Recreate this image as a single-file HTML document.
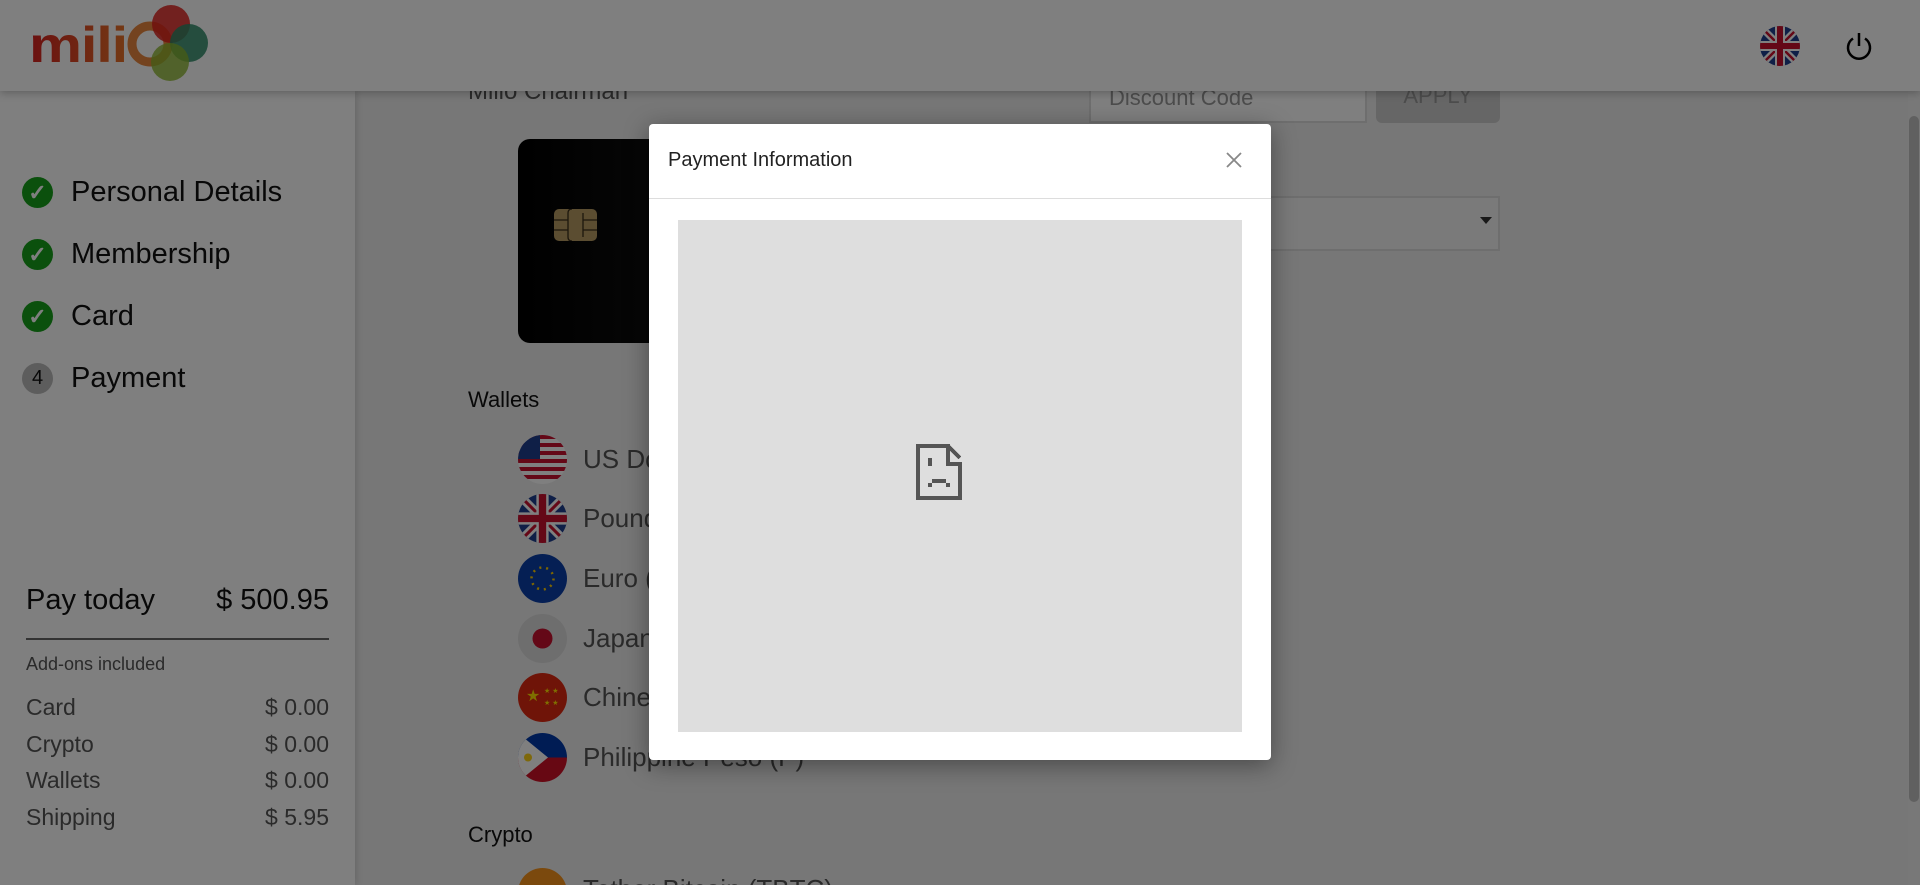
<!DOCTYPE html>
<html><head><meta charset="utf-8">
<style>
*{box-sizing:border-box;margin:0;padding:0}
html,body{width:1920px;height:885px;overflow:hidden}
body{font-family:"Liberation Sans",sans-serif;background:#eee}
#wrap{position:relative;width:1920px;height:885px;overflow:hidden;background:#eee}
.abs{position:absolute}
#header{left:0;top:0;width:1920px;height:91px;background:#fff;box-shadow:0 2px 8px rgba(0,0,0,.25);z-index:3}
#side{left:0;top:91px;width:355px;height:794px;background:#fefefe;box-shadow:2px 0 6px rgba(0,0,0,.12);z-index:2}
.step{left:22px;font-size:29px;color:#111;display:flex;align-items:center;letter-spacing:0px}
.chk{width:31px;height:31px;border-radius:50%;background:#17a11a;color:#fff;font-size:22px;display:flex;align-items:center;justify-content:center;margin-right:18px;font-weight:bold}
.num{width:31px;height:31px;border-radius:50%;background:#bbb;color:#111;font-size:20px;display:flex;align-items:center;justify-content:center;margin-right:18px}
.row{left:26px;width:303px;display:flex;justify-content:space-between;font-size:23px;color:#555}
.flag{left:518px;width:49px;height:49px;border-radius:50%;overflow:hidden}
.wl{left:583px;font-size:26px;color:#555}
#ov{left:0;top:0;width:1920px;height:885px;background:rgba(0,0,0,.5);z-index:10}
#modal{left:649px;top:124px;width:622px;height:636px;background:#fff;border-radius:4px;z-index:11;box-shadow:0 5px 25px rgba(0,0,0,.4)}
</style></head><body><div id="wrap">
<div id="header" class="abs">
 <svg class="abs" style="left:0;top:0" width="230" height="91" viewBox="0 0 230 91">
  <defs><linearGradient id="lg" x1="0" x2="1"><stop offset="0" stop-color="#d6201f"/><stop offset="1" stop-color="#e8742a"/></linearGradient></defs>
  <text x="29" y="62" font-family="Liberation Sans" font-weight="bold" font-size="50" fill="url(#lg)" letter-spacing="-1" textLength="98" lengthAdjust="spacingAndGlyphs">mili</text>
  <circle cx="150" cy="44" r="18" fill="none" stroke="#e67a2a" stroke-width="9" opacity=".9"/>
  <circle cx="171" cy="24" r="19" fill="#e0211c" opacity=".85"/>
  <circle cx="189" cy="43" r="19" fill="#2a8a66" opacity=".85"/>
  <circle cx="170" cy="62" r="19" fill="#8bb52d" opacity=".8"/>
 </svg>
 <svg class="abs" style="left:1760px;top:26px" width="40" height="40" viewBox="0 0 40 40">
  <clipPath id="c0"><circle cx="20" cy="20" r="20"/></clipPath>
  <g clip-path="url(#c0)"><rect width="40" height="40" fill="#1f3f8f"/>
  <path d="M0 0L40 40M40 0L0 40" stroke="#fff" stroke-width="7"/><path d="M0 0L40 40M40 0L0 40" stroke="#c8102e" stroke-width="2.5"/>
  <path d="M20 0V40M0 20H40" stroke="#fff" stroke-width="10"/><path d="M20 0V40M0 20H40" stroke="#c8102e" stroke-width="6"/></g>
 </svg>
 <svg class="abs" style="left:1844px;top:31px" width="30" height="30" viewBox="0 0 30 30" fill="none" stroke="#000" stroke-width="2.5">
  <path d="M9 7.5A11 11 0 1 0 21 7.5"/><path d="M15 2V15"/>
 </svg>
</div>
<div id="side" class="abs">
 <div class="abs step" style="top:85px"><div class="chk">✓</div>Personal Details</div>
 <div class="abs step" style="top:147px"><div class="chk">✓</div>Membership</div>
 <div class="abs step" style="top:209px"><div class="chk">✓</div>Card</div>
 <div class="abs step" style="top:271px"><div class="num">4</div>Payment</div>
 <div class="abs" style="left:26px;top:493px;width:303px;display:flex;justify-content:space-between;font-size:29px;color:#111"><span>Pay today</span><span>$ 500.95</span></div>
 <div class="abs" style="left:26px;top:547px;width:303px;height:2px;background:#666"></div>
 <div class="abs" style="left:26px;top:563px;font-size:18px;color:#555">Add-ons included</div>
 <div class="abs row" style="top:603px"><span>Card</span><span>$ 0.00</span></div>
 <div class="abs row" style="top:640px"><span>Crypto</span><span>$ 0.00</span></div>
 <div class="abs row" style="top:676px"><span>Wallets</span><span>$ 0.00</span></div>
 <div class="abs row" style="top:713px"><span>Shipping</span><span>$ 5.95</span></div>
</div>
<div class="abs" style="left:468px;top:78px;font-size:24px;color:#555">Milio Chairman</div>
<div class="abs" style="left:1089px;top:73px;width:278px;height:50px;border:2px solid #ddd;background:#fff;font-size:22px;color:#999;padding:10px 18px">Discount Code</div>
<div class="abs" style="left:1376px;top:73px;width:124px;height:50px;border-radius:6px;background:#ccc;font-size:22px;color:#999;text-align:center;padding-top:10px">APPLY</div>
<div class="abs" style="left:1100px;top:196px;width:400px;height:55px;border:2px solid #ddd;background:#f4f4f4"></div>
<div class="abs" style="left:1480px;top:217px;width:0;height:0;border-left:6px solid transparent;border-right:6px solid transparent;border-top:7px solid #333"></div>
<div class="abs" style="left:518px;top:139px;width:260px;height:204px;border-radius:12px;background:linear-gradient(90deg,#000,#1a1a1a)">
 <svg class="abs" style="left:36px;top:70px" width="43" height="32" viewBox="0 0 43 32"><rect width="43" height="32" rx="5" fill="#b79a62"/><path d="M0 11H14M0 21H14M29 11H43M29 21H43M14 4Q14 0 18 0M14 4V28Q14 32 18 32M29 4V28" stroke="#3a2f1a" stroke-width="1.3" fill="none"/></svg>
</div>
<div class="abs" style="left:468px;top:387px;font-size:22px;color:#111">Wallets</div>
<svg class="abs flag" style="top:435px" viewBox="0 0 49 49"><rect width="49" height="49" fill="#fff"/><g fill="#c8102e"><rect y="0" width="49" height="4"/><rect y="8" width="49" height="4"/><rect y="16" width="49" height="4"/><rect y="24" width="49" height="4"/><rect y="32" width="49" height="4"/><rect y="40" width="49" height="4"/></g><rect width="22" height="24" fill="#1f3f8f"/></svg>
<svg class="abs flag" style="top:494px" viewBox="0 0 40 40"><rect width="40" height="40" fill="#1f3f8f"/><path d="M0 0L40 40M40 0L0 40" stroke="#fff" stroke-width="7"/><path d="M0 0L40 40M40 0L0 40" stroke="#c8102e" stroke-width="2.5"/><path d="M20 0V40M0 20H40" stroke="#fff" stroke-width="10"/><path d="M20 0V40M0 20H40" stroke="#c8102e" stroke-width="6"/></svg>
<svg class="abs flag" style="top:554px" viewBox="0 0 49 49"><rect width="49" height="49" fill="#0a3ea8"/><circle cx="24.5" cy="24.5" r="11" fill="none" stroke="#fc0" stroke-width="2.5" stroke-dasharray="2 4.9"/></svg>
<svg class="abs flag" style="top:614px" viewBox="0 0 49 49"><rect width="49" height="49" fill="#dcdcdc"/><circle cx="24.5" cy="24.5" r="10" fill="#c8102e"/></svg>
<svg class="abs flag" style="top:673px" viewBox="0 0 49 49"><rect width="49" height="49" fill="#de2910"/><text x="8" y="28" font-size="16" fill="#ffde00">★</text><text x="26" y="20" font-size="7" fill="#ffde00">★ ★</text><text x="26" y="32" font-size="7" fill="#ffde00">★ ★</text></svg>
<svg class="abs flag" style="top:733px" viewBox="0 0 49 49"><rect width="49" height="25" fill="#0038a8"/><rect y="24.5" width="49" height="25" fill="#ce1126"/><path d="M0 0L30 24.5L0 49Z" fill="#fff"/><circle cx="10" cy="24.5" r="4" fill="#fcd116"/></svg>
<div class="abs wl" style="top:444px">US Dollar ($)</div>
<div class="abs wl" style="top:503px">Pound (£)</div>
<div class="abs wl" style="top:563px">Euro (€)</div>
<div class="abs wl" style="top:623px">Japanese Yen (¥)</div>
<div class="abs wl" style="top:682px">Chinese Yuan (¥)</div>
<div class="abs wl" style="top:742px">Philippine Peso (₱)</div>
<div class="abs" style="left:468px;top:822px;font-size:22px;color:#111">Crypto</div>
<div class="abs" style="left:518px;top:868px;width:49px;height:49px;border-radius:50%;background:#f7931a"></div>
<div class="abs" style="left:583px;top:874px;font-size:26px;color:#555">Tether Bitcoin (TBTC)</div>
<div class="abs" style="left:1908px;top:91px;width:12px;height:794px;background:#f1f1f1"></div>
<div class="abs" style="left:1909px;top:116px;width:10px;height:686px;border-radius:5px;background:#c1c1c1"></div>
<div id="ov" class="abs"></div>
<div id="modal" class="abs">
 <div class="abs" style="left:19px;top:25px;font-size:20px;color:#222">Payment Information</div>
 <svg class="abs" style="left:577px;top:28px" width="16" height="16" viewBox="0 0 16 16"><path d="M1 1L15 15M15 1L1 15" stroke="#888" stroke-width="1.8"/></svg>
 <div class="abs" style="left:0;top:74px;width:622px;height:1px;background:#ddd"></div>
 <div class="abs" style="left:29px;top:96px;width:564px;height:512px;background:#dedede">
  <svg class="abs" style="left:238px;top:224px" width="46" height="56" viewBox="0 0 46 56" fill="none" stroke="#555" stroke-width="4" shape-rendering="crispEdges">
   <path d="M2 2H32V20H44V54H2Z"/><path d="M32 2L44 14"/>
   <rect x="12" y="14" width="4" height="8" fill="#555" stroke="none"/>
   <rect x="16" y="35" width="14" height="4" fill="#555" stroke="none"/>
   <rect x="12" y="39" width="4" height="4" fill="#555" stroke="none"/>
   <rect x="30" y="39" width="4" height="4" fill="#555" stroke="none"/>
  </svg>
 </div>
</div>
</div></body></html>
